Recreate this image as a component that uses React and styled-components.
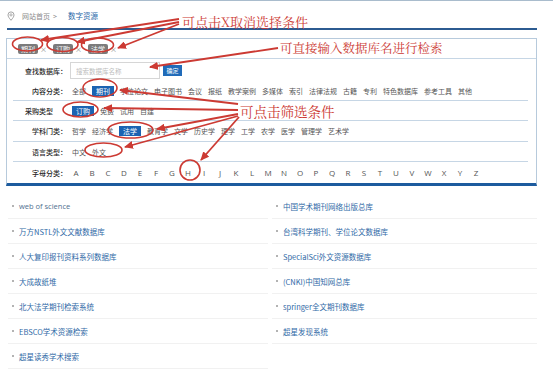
import React from 'react';
import styled, { createGlobalStyle } from 'styled-components';

const GlobalStyle = createGlobalStyle`
  html, body {
    margin: 0;
    padding: 0;
    background: #fff;
  }
  body {
    font-family: "Noto Sans CJK SC", "Noto Sans", sans-serif;
  }
`;

const RED = '#cc3a33';

const Page = styled.div`
  position: relative;
  width: 553px;
  height: 379px;
  overflow: hidden;
  background: #fff;
`;

const TopRule = styled.div`
  height: 1px;
  background: #a9bccd;
`;

const Breadcrumb = styled.div`
  box-sizing: border-box;
  display: flex;
  align-items: center;
  width: 530px;
  height: 29px;
  margin-left: 7px;
  padding-top: 2px;
  border-bottom: 2px solid #2c5b91;
  font-size: 7px;
  color: #8a8a8a;
`;

const Crumb = styled.span`
  color: ${(p) => (p.$active ? '#2a67a8' : '#8a8a8a')};
  font-size: ${(p) => (p.$active ? '7.5px' : '7px')};
  margin-left: ${(p) => p.$gap || 0}px;
`;

const Panel = styled.div`
  width: 529px;
  margin: 8px 0 0 6px;
  border: 1px solid #b7cadc;
  border-bottom: 3px solid #1d5b9e;
`;

const Row = styled.div`
  display: flex;
  align-items: center;
  height: ${(p) => p.$h}px;
  margin: 0 8px 0 6px;
  border-bottom: ${(p) => (p.$line ? '1px solid #c6d6e5' : 'none')};
`;

const TagRow = styled.div`
  display: flex;
  align-items: center;
  gap: 6px;
  height: 19px;
  padding-left: 11px;
  border-bottom: 1px solid #c6d6e5;
`;

const Tag = styled.span`
  display: inline-flex;
  align-items: center;
`;

const TagLabel = styled.span`
  background: #7b7b7b;
  color: #fff;
  font-size: 7px;
  line-height: 8px;
  padding: 1px 3px;
  border-radius: 2px;
`;

const TagClose = styled.span`
  color: #8a8a8a;
  font-size: 7px;
  margin-left: 2px;
`;

const Label = styled.div`
  width: 54px;
  flex-shrink: 0;
  text-align: ${(p) => (p.$left ? 'left' : 'right')};
  padding-left: ${(p) => (p.$left ? '12px' : '0')};
  box-sizing: border-box;
  font-size: 7px;
  font-weight: 500;
  color: #1f1f1f;
  white-space: nowrap;
`;

const Items = styled.div`
  display: flex;
  align-items: center;
  margin-left: 2px;
`;

const Item = styled.span`
  font-size: 7px;
  line-height: 8px;
  white-space: nowrap;
  color: ${(p) => (p.$on ? '#fff' : '#555')};
  background: ${(p) => (p.$on ? '#1b63b2' : 'transparent')};
  padding: ${(p) => (p.$on ? '1px 4px' : '1px 3px')};
  margin: ${(p) => (p.$on ? '0 3px' : '0')};
`;

const SearchInput = styled.input`
  box-sizing: border-box;
  width: 90px;
  height: 17px;
  margin-left: 3px;
  padding: 0 0 0 5px;
  border: 1px solid #d6d6d6;
  font-family: inherit;
  font-size: 6.5px;
  outline: none;
  &::placeholder {
    color: #bdbdbd;
  }
`;

const SearchButton = styled.button`
  width: 19px;
  height: 11px;
  margin-left: 3px;
  padding: 0;
  border: none;
  background: #206bb9;
  color: #fff;
  font-family: inherit;
  font-size: 6px;
  line-height: 11px;
`;

const Letters = styled.div`
  display: flex;
  margin-left: 1px;
`;

const Letter = styled.span`
  width: 16px;
  text-align: center;
  font-family: "Open Sans", "Liberation Sans", sans-serif;
  font-size: 8px;
  color: #555;
`;

const List = styled.div`
  display: grid;
  grid-template-columns: 260px 265px;
  column-gap: 4px;
  margin: 8px 0 0 8px;
  align-content: start;
`;

const ListItem = styled.div`
  box-sizing: border-box;
  display: flex;
  align-items: center;
  height: 25px;
  padding-left: 4px;
  border-bottom: 1px solid #f1f1f1;
  font-size: 7.5px;
  color: ${(p) => (p.$latin ? '#50708f' : '#2f69a6')};
  font-family: ${(p) => (p.$latin ? '"Open Sans", "Noto Sans CJK SC", sans-serif' : 'inherit')};

  &::before {
    content: '';
    width: 2px;
    height: 2px;
    border-radius: 50%;
    background: #9a9a9a;
    margin-right: 5px;
  }
`;

const Overlay = styled.svg`
  position: absolute;
  top: 0;
  left: 0;
  pointer-events: none;
`;

const Note = styled.span`
  position: absolute;
  left: ${(p) => p.$x}px;
  top: ${(p) => p.$y}px;
  font-family: "Noto Serif CJK SC", "Noto Sans CJK SC", serif;
  font-size: ${(p) => p.$size}px;
  line-height: 1;
  color: ${RED};
  white-space: nowrap;
`;

const PinIcon = () => (
  <svg width="8" height="10" viewBox="0 0 8 10">
    <path d="M4 9.3C2.2 7.2 1 5.5 1 3.9A3 3 0 0 1 7 3.9C7 5.5 5.8 7.2 4 9.3Z" fill="none" stroke="#9a9a9a" strokeWidth="0.9" />
    <circle cx="4" cy="3.9" r="1.1" fill="none" stroke="#9a9a9a" strokeWidth="0.8" />
  </svg>
);

const contentTypes = ['全部', '期刊', '学位论文', '电子图书', '会议', '报纸', '教学案例', '多媒体', '索引', '法律法规', '古籍', '专利', '特色数据库', '参考工具', '其他'];
const purchaseTypes = ['订购', '免费', '试用', '自建'];
const subjects = ['哲学', '经济学', '法学', '教育学', '文学', '历史学', '理学', '工学', '农学', '医学', '管理学', '艺术学'];
const languages = ['中文', '外文'];
const letters = 'ABCDEFGHIJKLMNOPQRSTUVWXYZ'.split('');

const databases = [
  ['web of science', '中国学术期刊网络出版总库'],
  ['万方NSTL外文文献数据库', '台湾科学期刊、学位论文数据库'],
  ['人大复印报刊资料系列数据库', 'SpecialSci外文资源数据库'],
  ['大成故纸堆', '(CNKI)中国知网总库'],
  ['北大法学期刊检索系统', 'springer全文期刊数据库'],
  ['EBSCO学术资源检索', '超星发现系统'],
  ['超星读秀学术搜索', null],
];

const arrows = [
  [179, 19, 41, 40],
  [179, 22, 77, 42],
  [179, 24, 118, 48],
  [278, 48, 150, 67],
  [238, 104, 120, 90],
  [238, 110, 104, 108],
  [238, 114, 157, 129],
  [238, 116, 125, 147],
  [239, 117, 201, 160],
];

const ellipses = [
  [27.5, 44, 15, 7],
  [62.5, 44.5, 15.5, 7],
  [97.5, 45, 16, 7],
  [100, 88, 17, 9],
  [80.5, 109.5, 17.5, 7.5],
  [130.5, 130, 22.5, 8],
  [103.5, 150, 18.5, 7],
  [190, 170, 10, 10],
];

const Annotations = () => (
  <Overlay width="553" height="379" viewBox="0 0 553 379">
    <defs>
      <marker id="head" markerWidth="9" markerHeight="8" refX="8" refY="4" orient="auto" markerUnits="userSpaceOnUse">
        <path d="M0 0L9 4L0 8Z" fill={RED} />
      </marker>
    </defs>
    {ellipses.map(([cx, cy, rx, ry], i) => (
      <ellipse key={i} cx={cx} cy={cy} rx={rx} ry={ry} fill="none" stroke={RED} strokeWidth="1.6" />
    ))}
    {arrows.map(([x1, y1, x2, y2], i) => (
      <line key={i} x1={x1} y1={y1} x2={x2} y2={y2} stroke={RED} strokeWidth="1.8" markerEnd="url(#head)" />
    ))}
  </Overlay>
);

const App = () => {
  return (
    <Page>
      <GlobalStyle />
      <TopRule />
      <Breadcrumb>
        <PinIcon />
        <Crumb $gap={7}>网站首页</Crumb>
        <Crumb $gap={3}>&gt;</Crumb>
        <Crumb $gap={11} $active>数字资源</Crumb>
      </Breadcrumb>

      <Panel>
        <TagRow>
          {['期刊', '订购', '法学'].map((t) => (
            <Tag key={t}>
              <TagLabel>{t}</TagLabel>
              <TagClose>×</TagClose>
            </Tag>
          ))}
        </TagRow>

        <Row $h={23}>
          <Label>查找数据库：</Label>
          <SearchInput placeholder="搜索数据库名称" />
          <SearchButton>确定</SearchButton>
        </Row>

        <Row $h={18} $line>
          <Label>内容分类：</Label>
          <Items>
            {contentTypes.map((t) => (
              <Item key={t} $on={t === '期刊'}>{t}</Item>
            ))}
          </Items>
        </Row>

        <Row $h={19} $line>
          <Label $left>采购类型</Label>
          <Items>
            {purchaseTypes.map((t) => (
              <Item key={t} $on={t === '订购'}>{t}</Item>
            ))}
          </Items>
        </Row>

        <Row $h={20} $line>
          <Label>学科门类：</Label>
          <Items>
            {subjects.map((t) => (
              <Item key={t} $on={t === '法学'}>{t}</Item>
            ))}
          </Items>
        </Row>

        <Row $h={19} $line>
          <Label>语言类型：</Label>
          <Items>
            {languages.map((t) => (
              <Item key={t}>{t}</Item>
            ))}
          </Items>
        </Row>

        <Row $h={21}>
          <Label>字母分类：</Label>
          <Letters>
            {letters.map((l) => (
              <Letter key={l}>{l}</Letter>
            ))}
          </Letters>
        </Row>
      </Panel>

      <List>
        {databases.map(([left, right]) => (
          <React.Fragment key={left}>
            <ListItem $latin={left === 'web of science'}>{left}</ListItem>
            {right ? <ListItem>{right}</ListItem> : <div />}
          </React.Fragment>
        ))}
      </List>

      <Note $x={182} $y={15} $size={13}>可点击X取消选择条件</Note>
      <Note $x={280} $y={42} $size={12.5}>可直接输入数据库名进行检索</Note>
      <Note $x={240} $y={105} $size={13.5}>可点击筛选条件</Note>
      <Annotations />
    </Page>
  );
};

export default App;
